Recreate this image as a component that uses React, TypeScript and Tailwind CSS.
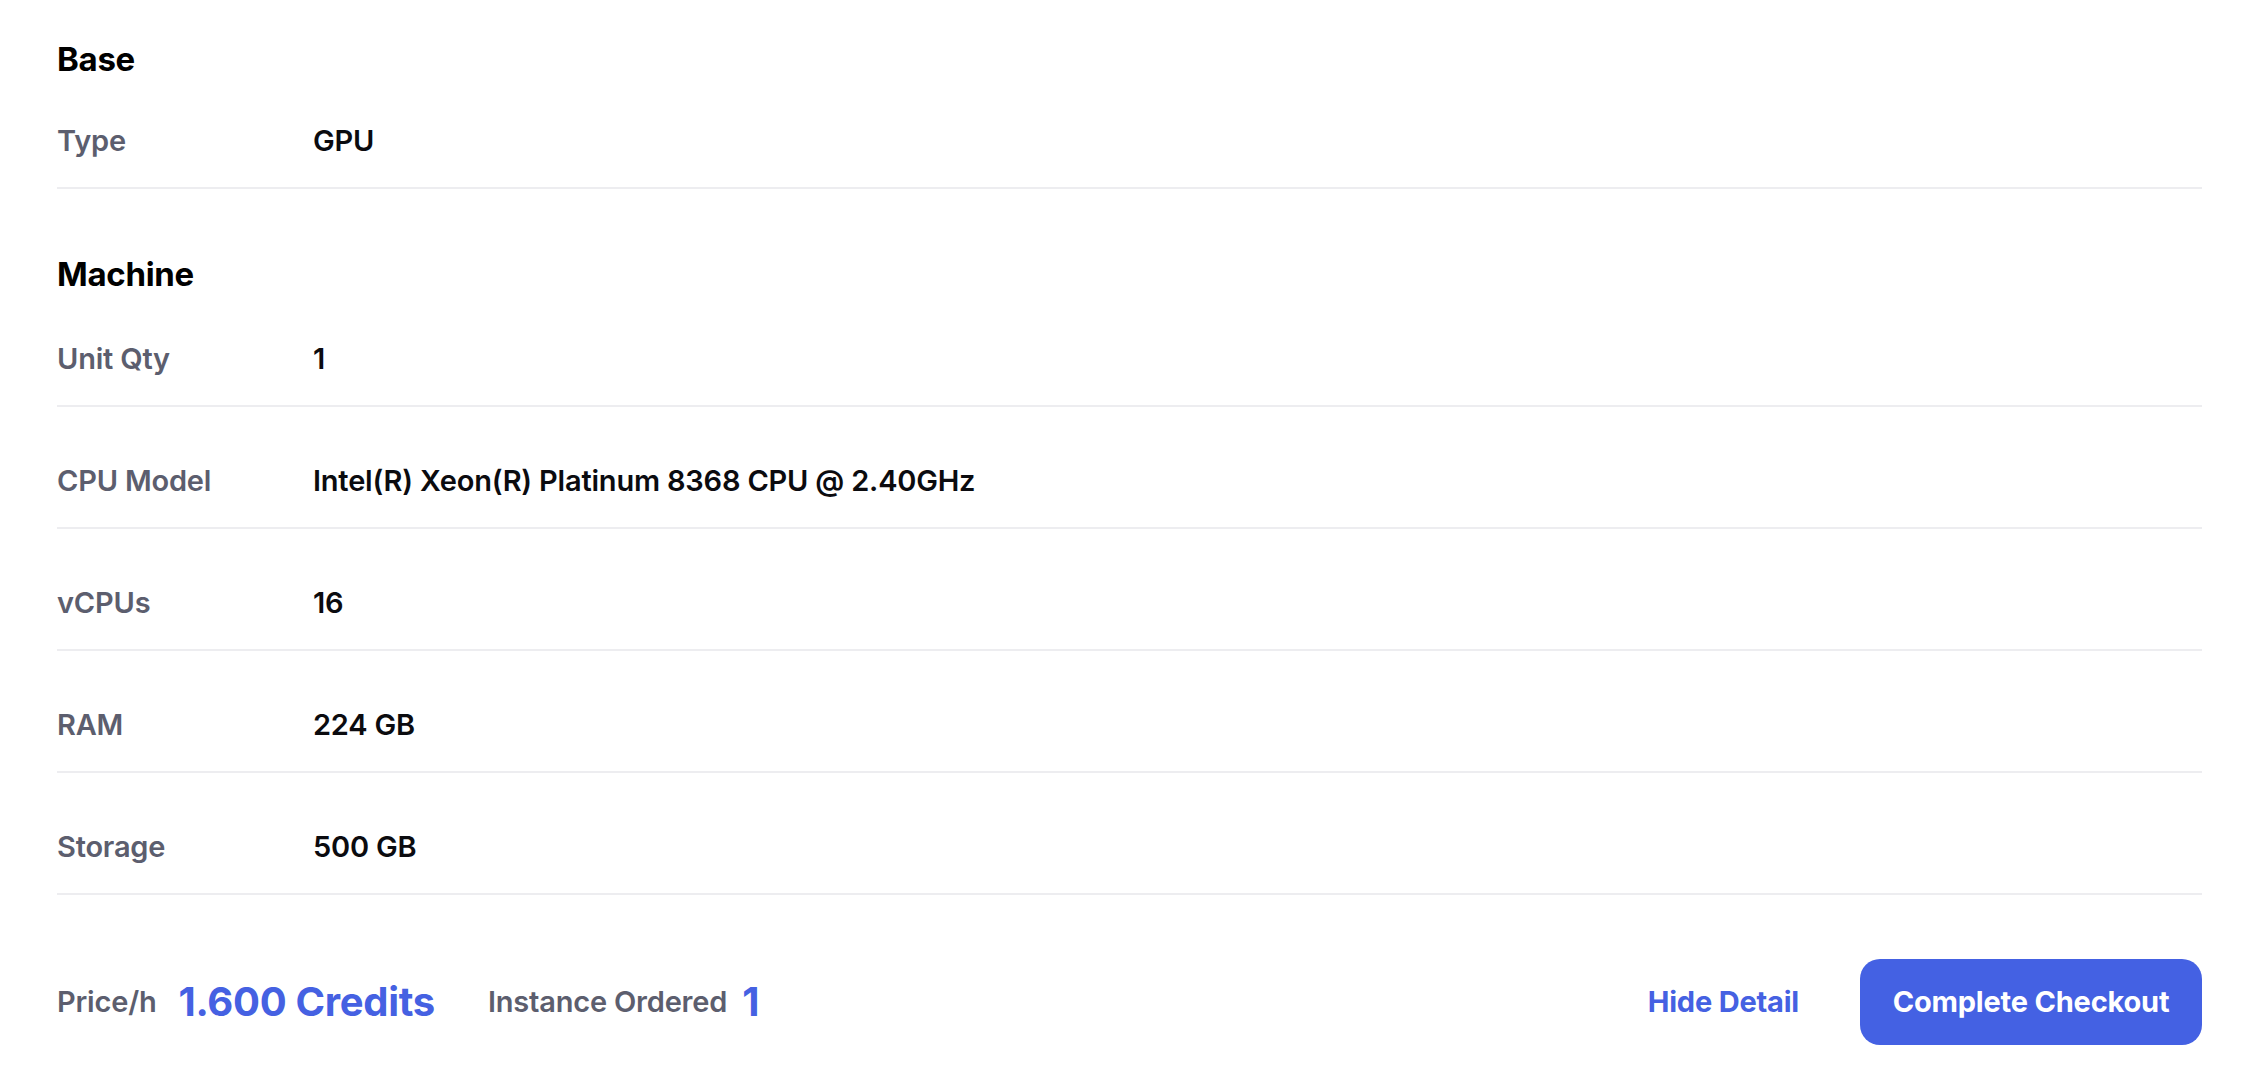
import React from "react";

const font = { fontFamily: "Inter, 'Noto Sans', sans-serif" };

function Row({ label, value, first }: { label: string; value: string; first?: boolean }) {
  return (
    <div className={`flex items-center border-b-2 border-[#ededf0] pb-[28px] ${first ? "pt-[44px]" : "pt-[56px]"}`}>
      <div className="w-[256px] shrink-0 text-[29px] leading-[36px] font-semibold text-[#5c5e6e] tracking-[-0.2px]">{label}</div>
      <div className="text-[29px] leading-[36px] font-semibold text-[#0b0b0f] tracking-[-0.2px]">{value}</div>
    </div>
  );
}

export default function App() {
  return (
    <div className="w-full h-[1070px] bg-white overflow-hidden" style={font}>
      <div className="pl-[57px] pr-[50px] pt-[39px]">
        <h2 className="text-[33px] leading-[40px] font-bold text-black tracking-[-0.3px]">Base</h2>
        <Row first label="Type" value="GPU" />
        <h2 className="mt-[65px] text-[33px] leading-[40px] font-bold text-black tracking-[-0.3px]">Machine</h2>
        <div className="pt-[3px]">
          <Row first label="Unit Qty" value="1" />
        </div>
        <Row label="CPU Model" value="Intel(R) Xeon(R) Platinum 8368 CPU @ 2.40GHz" />
        <Row label="vCPUs" value="16" />
        <Row label="RAM" value="224 GB" />
        <Row label="Storage" value="500 GB" />
        <div className="mt-[64px] flex items-center">
          <span className="text-[29px] font-semibold text-[#5c5e6e] tracking-[-0.2px]">Price/h</span>
          <span className="ml-[22px] text-[40px] font-bold text-[#4561e2] tracking-[-0.3px]">1.600 Credits</span>
          <span className="ml-[53px] text-[29px] font-semibold text-[#5c5e6e] tracking-[-0.2px]">Instance Ordered</span>
          <span className="ml-[15px] text-[40px] font-bold text-[#4561e2]">1</span>
          <div className="flex-1" />
          <button className="text-[29px] font-bold text-[#4561e2] tracking-[-0.2px] mr-[61px]">Hide Detail</button>
          <button className="h-[86px] w-[342px] rounded-[20px] bg-[#4461e3] text-white text-[29px] font-bold tracking-[-0.2px]">
            Complete Checkout
          </button>
        </div>
      </div>
    </div>
  );
}
